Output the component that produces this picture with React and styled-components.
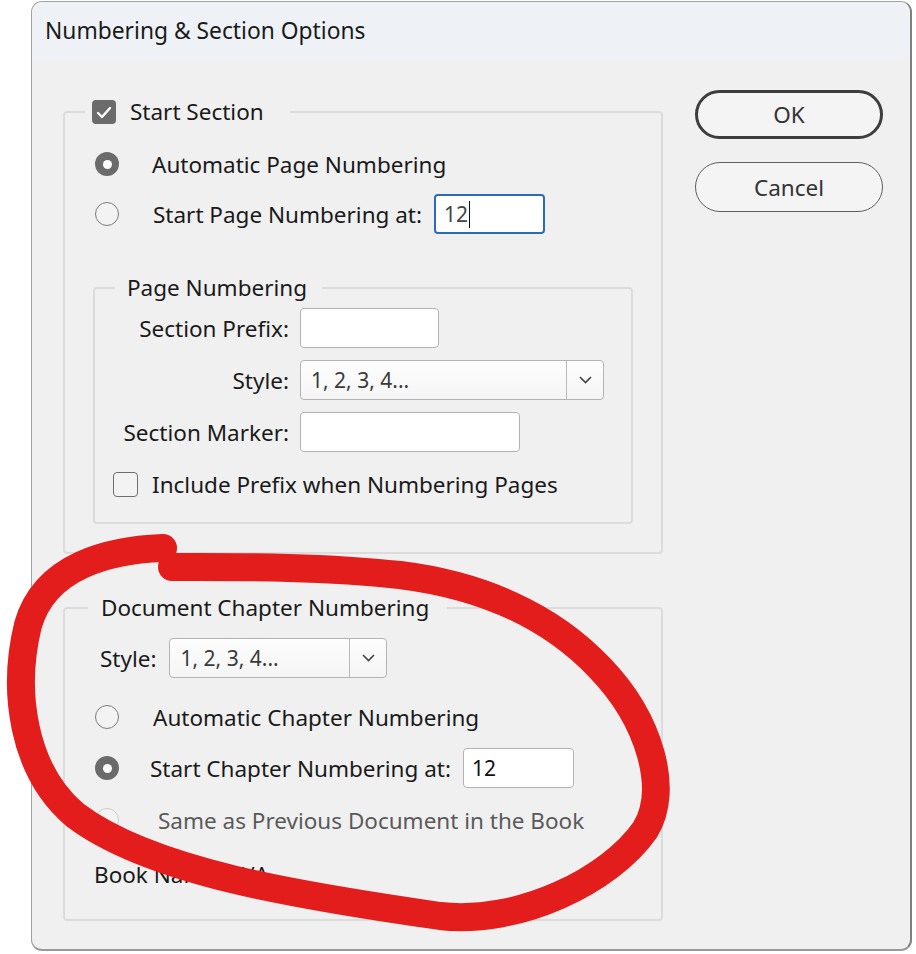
import React from 'react';
import styled, { createGlobalStyle } from 'styled-components';

const GlobalStyle = createGlobalStyle`
  html, body {
    margin: 0;
    padding: 0;
    background: #fff;
  }
  body {
    font-family: "Noto Sans", "Open Sans", sans-serif;
    color: #1a1a1a;
  }
`;

const Page = styled.div`
  position: relative;
  width: 916px;
  height: 954px;
  overflow: hidden;
  padding: 1px 0 0 31px;
  box-sizing: border-box;
`;

const Dialog = styled.div`
  width: 881px;
  height: 950px;
  box-sizing: border-box;
  border: 1px solid #a2a2a2;
  border-right: 2px solid #808080;
  border-bottom: 2px solid #9a9a9a;
  border-radius: 11px;
  overflow: hidden;
  background: #f0f0f0;
  display: flex;
  flex-direction: column;
`;

const TitleBar = styled.div`
  height: 57px;
  flex-shrink: 0;
  background: #eef2f6;
  display: flex;
  align-items: center;
  padding-left: 13px;
  font-size: 22.8px;
  color: #1a1a1a;
`;

const Body = styled.div`
  display: flex;
  align-items: flex-start;
  gap: 32px;
  padding: 31px 0 0 31px;
`;

const LeftColumn = styled.div`
  width: 600px;
  display: flex;
  flex-direction: column;
`;

const RightColumn = styled.div`
  width: 188px;
  display: flex;
  flex-direction: column;
  gap: 23px;
`;

const Group = styled.fieldset`
  margin: ${p => p.$top}px 0 0 0;
  padding: ${p => p.$pad};
  border: 2px solid #dcdcdc;
  border-radius: 4px;
  min-width: 0;
  box-sizing: border-box;
`;

const Legend = styled.legend`
  display: flex;
  align-items: center;
  gap: 14px;
  height: 26px;
  margin-left: ${p => p.$offset}px;
  padding: 0 ${p => p.$right}px 0 ${p => p.$left}px;
  font-size: 22.5px;
  line-height: 26px;
`;

const Row = styled.div`
  display: flex;
  align-items: center;
  height: 40px;
  margin-top: ${p => p.$top || 0}px;
  padding-left: ${p => p.$indent || 0}px;
  font-size: 22.5px;
  color: ${p => (p.$disabled ? '#5a5a5a' : '#1a1a1a')};
`;

const RowText = styled.span`
  margin-left: ${p => p.$gap || 0}px;
  white-space: nowrap;
`;

const Radio = styled.span`
  width: 24px;
  height: 24px;
  flex-shrink: 0;
  box-sizing: border-box;
  border-radius: 50%;
  display: flex;
  align-items: center;
  justify-content: center;
  background: ${p => (p.$checked ? '#6b6b6b' : '#f3f3f3')};
  border: ${p =>
    p.$checked ? 'none' : p.$disabled ? '1.5px solid #cdcdcd' : '1.5px solid #7a7a7a'};

  &::after {
    content: '';
    display: ${p => (p.$checked ? 'block' : 'none')};
    width: 9px;
    height: 9px;
    border-radius: 50%;
    background: #fff;
  }
`;

const CheckBox = styled.span`
  width: ${p => p.$size}px;
  height: ${p => p.$size}px;
  flex-shrink: 0;
  box-sizing: border-box;
  border-radius: 4px;
  display: flex;
  align-items: center;
  justify-content: center;
  background: ${p => (p.$checked ? '#6b6b6b' : '#f3f3f3')};
  border: ${p => (p.$checked ? 'none' : '1.5px solid #6e6e6e')};
`;

const TextBox = styled.div`
  width: ${p => p.$w}px;
  height: 40px;
  box-sizing: border-box;
  margin-left: ${p => p.$gap || 0}px;
  border: ${p => (p.$focused ? '2px solid #2b6cb8' : '1.5px solid #b3b3b3')};
  border-radius: 4px;
  background: #fff;
  display: flex;
  align-items: center;
  padding-left: 8px;
  font-size: 21px;
  color: ${p => (p.$focused ? '#444' : '#111')};
`;

const Caret = styled.span`
  width: 1px;
  height: 27px;
  background: #111;
  margin-left: 1px;
`;

const Select = styled.div`
  width: ${p => p.$w}px;
  height: 40px;
  box-sizing: border-box;
  margin-left: ${p => p.$gap || 0}px;
  display: flex;
  border: 1.5px solid #b3b3b3;
  border-radius: 4px;
  background: linear-gradient(#fdfdfd, #f5f5f5);
`;

const SelectValue = styled.div`
  flex: 1;
  display: flex;
  align-items: center;
  padding-left: 10px;
  font-size: 21px;
  color: #3a3a3a;
`;

const SelectButton = styled.div`
  width: 36px;
  border-left: 1.5px solid #b8b8b8;
  display: flex;
  align-items: center;
  justify-content: center;
`;

const Form = styled.div`
  display: grid;
  grid-template-columns: 176px auto;
  grid-auto-rows: 40px;
  column-gap: 11px;
  row-gap: 12px;
  align-items: center;
  font-size: 22.5px;
`;

const FieldLabel = styled.span`
  text-align: right;
  white-space: nowrap;
`;

const FormRow = styled.div`
  grid-column: 1 / 3;
  display: flex;
  align-items: center;
`;

const Field = styled.div`
  display: flex;
`;

const Button = styled.button`
  width: 188px;
  height: ${p => (p.$primary ? 49 : 50)}px;
  box-sizing: border-box;
  border-radius: 25px;
  border: ${p => (p.$primary ? '3px solid #3d3d3d' : '1.5px solid #5e5e5e')};
  background: #f4f4f4;
  font-family: inherit;
  font-size: 22.5px;
  color: #333;
  padding: 0;
`;

const Annotation = styled.svg`
  position: absolute;
  left: 0;
  top: 0;
  pointer-events: none;
`;

const Chevron = () => (
  <svg width="13" height="8" viewBox="0 0 13 8">
    <polyline points="1,1 6.5,6.5 12,1" fill="none" stroke="#444" strokeWidth="1.6" />
  </svg>
);

const Tick = () => (
  <svg width="16" height="13" viewBox="0 0 16 13">
    <polyline points="2,7 6,11 14,2" fill="none" stroke="#fff" strokeWidth="2.4" strokeLinecap="round" strokeLinejoin="round" />
  </svg>
);

const StyleSelect = ({ width, gap }) => (
  <Select $w={width} $gap={gap}>
    <SelectValue>1, 2, 3, 4...</SelectValue>
    <SelectButton><Chevron /></SelectButton>
  </Select>
);

export default function App() {
  return (
    <Page>
      <GlobalStyle />
      <Dialog>
        <TitleBar>Numbering &amp; Section Options</TitleBar>
        <Body>
          <LeftColumn>
            <Group $top={9} $pad="19px 28px 28px 28px">
              <Legend $offset={-8} $left={7} $right={26}>
                <CheckBox $size={24} $checked><Tick /></CheckBox>
                Start Section
              </Legend>
              <Row $indent={2}>
                <Radio $checked />
                <RowText $gap={33}>Automatic Page Numbering</RowText>
              </Row>
              <Row $indent={2} $top={10}>
                <Radio />
                <RowText $gap={34}>Start Page Numbering at:</RowText>
                <TextBox $w={111} $gap={12} $focused>12<Caret /></TextBox>
              </Row>

              <Group $top={41} $pad="7px 0 18px 18px">
                <Legend $offset={2} $left={12} $right={15}>Page Numbering</Legend>
                <Form>
                  <FieldLabel>Section Prefix:</FieldLabel>
                  <Field><TextBox $w={139} /></Field>
                  <FieldLabel>Style:</FieldLabel>
                  <Field><StyleSelect width={304} /></Field>
                  <FieldLabel>Section Marker:</FieldLabel>
                  <Field><TextBox $w={220} /></Field>
                  <FormRow>
                    <CheckBox $size={25} />
                    <RowText $gap={14}>Include Prefix when Numbering Pages</RowText>
                  </FormRow>
                </Form>
              </Group>
            </Group>

            <Group $top={41} $pad="17px 28px 25px 29px">
              <Legend $offset={-6} $left={13} $right={18}>Document Chapter Numbering</Legend>
              <Row $indent={6}>
                <RowText>Style:</RowText>
                <StyleSelect width={218} gap={13} />
              </Row>
              <Row $indent={1} $top={19}>
                <Radio />
                <RowText $gap={34}>Automatic Chapter Numbering</RowText>
              </Row>
              <Row $indent={1} $top={11}>
                <Radio $checked />
                <RowText $gap={31}>Start Chapter Numbering at:</RowText>
                <TextBox $w={111} $gap={12}>12</TextBox>
              </Row>
              <Row $indent={1} $top={12} $disabled>
                <Radio $disabled />
                <RowText $gap={39}>Same as Previous Document in the Book</RowText>
              </Row>
              <Row $top={14}>
                <RowText>Book Name: N/A</RowText>
              </Row>
            </Group>
          </LeftColumn>

          <RightColumn>
            <Button $primary>OK</Button>
            <Button>Cancel</Button>
          </RightColumn>
        </Body>
      </Dialog>

      <Annotation width="916" height="954" viewBox="0 0 916 954">
        <path
          d="M163,548 C110,550 45,565 28,625 C12,690 22,770 75,815 C150,872 300,896 440,916 C520,925 610,880 645,830 C670,790 650,720 600,668 C550,615 480,585 400,575 C320,566 230,567 172,567"
          fill="none"
          stroke="#e31c1c"
          strokeWidth="28"
          strokeLinecap="round"
          strokeLinejoin="round"
        />
      </Annotation>
    </Page>
  );
}
